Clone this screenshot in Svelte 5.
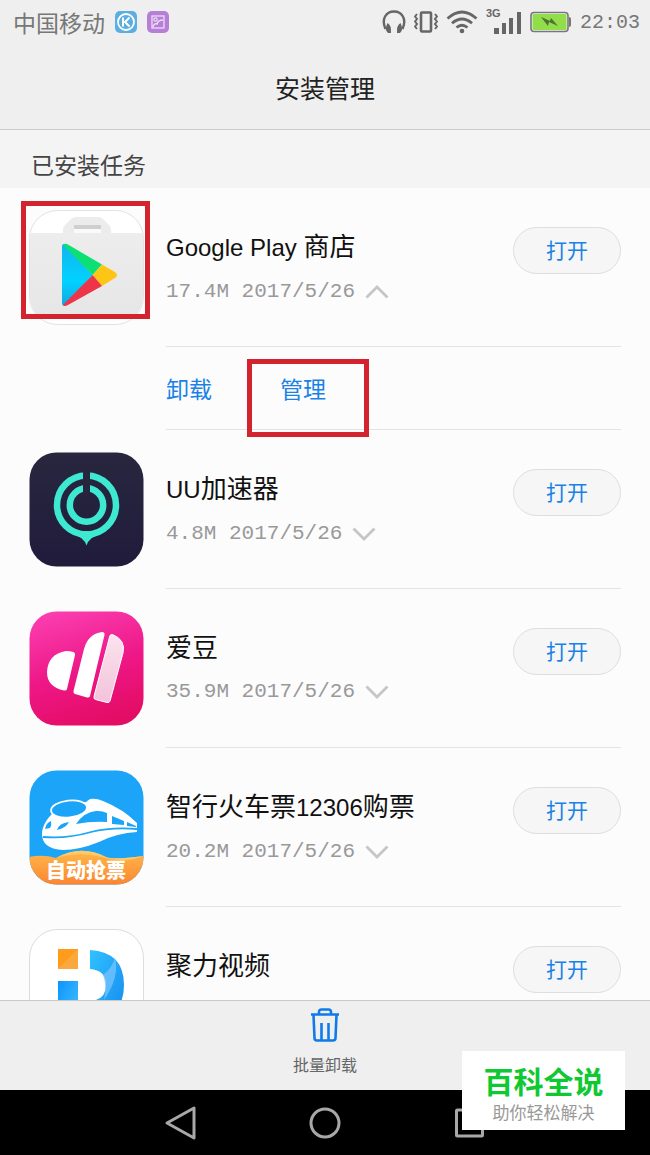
<script>
    let apps = $state([
        { id: 'play', name: 'Google Play 商店', size: '17.4M', date: '2017/5/26', open: true, marked: true },
        { id: 'uu', name: 'UU加速器', size: '4.8M', date: '2017/5/26', open: false },
        { id: 'idol', name: '爱豆', size: '35.9M', date: '2017/5/26', open: false },
        { id: 'train', name: '智行火车票12306购票', size: '20.2M', date: '2017/5/26', open: false },
        { id: 'video', name: '聚力视频', open: false }
    ]);

    // Split a name into latin and chinese parts
    function parts(name) {
        return name.match(/[\x00-\x7f]+|[^\x00-\x7f]+/g);
    }

    function isLatin(text) {
        return text.charCodeAt(0) < 128;
    }
</script>

<div class="screen">
    <div class="status">
        <span class="carrier">中国移动</span>
        <svg class="notice" width="22" height="22" viewBox="0 0 22 22">
            <rect width="22" height="22" rx="5" fill="#5bafe0" />
            <circle cx="11" cy="11" r="8" fill="none" stroke="#fff" stroke-width="1.8" />
            <path d="M8 6.500v9M14.500 6.500L10 11l4.500 4.500" fill="none" stroke="#fff" stroke-width="2" />
        </svg>
        <svg class="notice" width="22" height="22" viewBox="0 0 22 22">
            <rect width="22" height="22" rx="5" fill="#b57fd6" />
            <rect x="5" y="5" width="12" height="12" fill="none" stroke="#efdcf8" stroke-width="1.3" />
            <circle cx="8.500" cy="8.500" r="1.700" fill="none" stroke="#efdcf8" stroke-width="1.2" />
            <path d="M6 16q1-4 4-3 1-4 6-4" fill="none" stroke="#efdcf8" stroke-width="1.4" />
        </svg>
        <div class="signals">
            <svg width="24" height="24" viewBox="0 0 24 24">
                <path d="M3.500 19C-1 9 4 1.500 12 1.500S25 9 20.500 19" fill="none" stroke="#666" stroke-width="2.400" />
                <path d="M5.500 13q4 2 3.500 10H6Q2 20 5.500 13zM18.500 13q-4 2-3.500 10h3q4-3 .5-10z" fill="#666" />
            </svg>
            <svg width="24" height="24" viewBox="0 0 24 24">
                <rect x="7" y="2.500" width="10" height="19" rx="1" fill="none" stroke="#666" stroke-width="2.600" />
                <path d="M3 4L1 6.500l2 2.500-2 2.500L3 14l-2 2.500L3 19M21 4l2 2.500L21 9l2 2.500-2 2.500 2 2.500-2 2.500" fill="none" stroke="#666" stroke-width="2" />
            </svg>
            <svg width="32" height="24" viewBox="0 0 32 24">
                <path d="M1.500 8.500Q16-4.500 30.500 8.500M6 13.200q10-8.500 20 0M10.500 17.500q5.500-4.500 11 0" fill="none" stroke="#666" stroke-width="2.800" />
                <circle cx="16" cy="21" r="2.300" fill="#666" />
            </svg>
            <svg width="36" height="30" viewBox="0 0 36 30">
                <text x="0" y="10" font-size="11" font-weight="700" fill="#666">3G</text>
                <path d="M8 21h5v6H8zM16 16h4v11h-4zM23 11h4v16h-4zM31 5h4v22h-4z" fill="#666" />
            </svg>
            <svg width="42" height="22" viewBox="0 0 42 22">
                <rect x="1" y="1.500" width="37" height="19" rx="3" fill="#f2f2f2" stroke="#777" stroke-width="1.600" />
                <rect x="2.500" y="3" width="34" height="16" rx="1" fill="#92dd4a" />
                <path d="M39 6q2 0 2 2v6q0 2-2 2z" fill="#777" />
                <path d="M11 6l9 4 1-3 7 8-9-4-1 4z" fill="#4d7136" />
            </svg>
            <span class="clock">22:03</span>
        </div>
    </div>

    <header>
        <h1>安装管理</h1>
    </header>
    <h2>已安装任务</h2>

    <main>
        {#each apps as app (app.id)}
            <div class="row">
                <div class="icon">
                    {#if app.id === 'play'}
                        <svg viewBox="0 0 115 115">
                            <defs>
                                <linearGradient id="bag" x1="0" y1="0" x2="0" y2="1">
                                    <stop offset="0" stop-color="#ededed" />
                                    <stop offset="1" stop-color="#e6e6e6" />
                                </linearGradient>
                                <linearGradient id="playBlue" x1="0" y1="0" x2="0" y2="1">
                                    <stop offset="0" stop-color="#12b5ec" />
                                    <stop offset="0.600" stop-color="#00d2ff" />
                                    <stop offset="1" stop-color="#16a5dc" />
                                </linearGradient>
                            </defs>
                            <rect x="0.500" y="0.500" width="114" height="114" rx="28" fill="#fff" stroke="#e2e2e2" />
                            <path d="M34 23v-4q0-2 2-4l6-6q2-2 5-2h22q3 0 5 2l6 6q2 2 2 4v4z" fill="#ececec" />
                            <path d="M45 15h27v8H45z" fill="#fafafa" />
                            <path d="M45 15h27v4H45z" fill="#cfcfcf" />
                            <path d="M1 23h113v65q-1 11-9 19H10q-8-8-9-19z" fill="url(#bag)" />
                            <path d="M33 36q0-2 2-2l28.600 31L36 96q-3 0-3-3z" fill="url(#playBlue)" />
                            <path d="M34 35q2-2 4-1l35 20.500L63.600 65z" fill="#0ce075" />
                            <path d="M73 54.500l13 7.500q4 3 0 6l-13 8L63.600 65z" fill="#ffc516" />
                            <path d="M63.600 65L73 76 38 95.500q-3 1-4-.5z" fill="#ed3448" />
                        </svg>
                    {:else if app.id === 'uu'}
                        <svg viewBox="0 0 115 115">
                            <defs>
                                <linearGradient id="night" x1="0" y1="0" x2="0" y2="1">
                                    <stop offset="0" stop-color="#28273f" />
                                    <stop offset="1" stop-color="#201b3b" />
                                </linearGradient>
                            </defs>
                            <rect x="0.500" y="0.500" width="114" height="114" rx="27" fill="url(#night)" />
                            <circle cx="57.500" cy="53" r="29.500" fill="none" stroke="#3ee9d2" stroke-width="6.500" />
                            <circle cx="57.500" cy="53" r="16.700" fill="none" stroke="#3ee9d2" stroke-width="6.500" />
                            <path d="M42 81q13 4 15.500 12.500Q60 85 73 81l-15-2z" fill="#3ee9d2" />
                            <path d="M54 18h7v23h-7z" fill="#27263e" />
                        </svg>
                    {:else if app.id === 'idol'}
                        <svg viewBox="0 0 115 115">
                            <defs>
                                <linearGradient id="pink" x1="0.200" y1="0" x2="0.500" y2="1">
                                    <stop offset="0" stop-color="#fb3eb0" />
                                    <stop offset="0.550" stop-color="#ee1787" />
                                    <stop offset="1" stop-color="#e40d66" />
                                </linearGradient>
                                <linearGradient id="petal" x1="0" y1="0" x2="0" y2="1">
                                    <stop offset="0" stop-color="#fbe3ef" />
                                    <stop offset="1" stop-color="#f3c3d9" />
                                </linearGradient>
                            </defs>
                            <rect x="0.500" y="0.500" width="114" height="114" rx="27" fill="url(#pink)" />
                            <path d="M44.500 41q2 1 1.500 3l-8 34q-.5 2-3 1.500Q18 76 18 61q1-18 19-21 4 0 7.500 1z" fill="#fff" />
                            <path d="M73 21q3 0 2.500 3L61 85q-.5 2-3 1.500l-12-3.500q-2-.5-1.500-3L55 38q4-15 18-17z" fill="#fff" />
                            <path d="M80.500 26q.5-3 3-2.500Q97 29 94 42L81 90q-.5 2-3 1.500L66.500 88.500q-2-.5-1.500-3z" fill="url(#petal)" stroke="#fff" />
                        </svg>
                    {:else if app.id === 'train'}
                        <svg viewBox="0 0 115 115">
                            <defs>
                                <clipPath id="trainClip">
                                    <rect x="0.500" y="0.500" width="114" height="114" rx="27" />
                                </clipPath>
                                <linearGradient id="hill" x1="0" y1="0" x2="0" y2="1">
                                    <stop offset="0" stop-color="#ffb84a" />
                                    <stop offset="1" stop-color="#fb8532" />
                                </linearGradient>
                            </defs>
                            <g clip-path="url(#trainClip)">
                                <rect width="115" height="115" fill="#1ca5f8" />
                                <path d="M13 62q1-8 8-16l6-6 30-8 4-3q6-1 13 2 20 8 34 22v9q-20 1-38 10-20 8-36 8Q12 79 13 62z" fill="#fff" />
                                <ellipse cx="40" cy="39" rx="18" ry="8.500" fill="#1ca5f8" stroke="#fff" stroke-width="1.800" transform="rotate(-6 40 39)" />
                                <path d="M14 67q24 2 48-5 20-5 46-3" fill="none" stroke="#1ca5f8" stroke-width="1.800" />
                                <path d="M47 54q8-12 20-13 6-.5 11 2v9q-15-1-31 2zM83 46l12 5v4l-12-1zM98 52l9 4v1l-9-1zM28 60q2-7 12-8-3 6-12 8zM16 59q1-6 6-8 1 4-1 7z" fill="#1ca5f8" />
                                <path d="M0 87q14-3 27 1 25-14 50-1 6 3 38-1v29H0z" fill="url(#hill)" />
                                <path d="M27 88q25-14 50-1 6 3 38-1-22 8-42 1-22-6-46 1z" fill="#ffc966" />
                                <text x="57" y="108" text-anchor="middle" font-size="20" font-weight="900" fill="#fff">自动抢票</text>
                            </g>
                        </svg>
                    {:else}
                        <svg viewBox="0 0 115 115">
                            <defs>
                                <linearGradient id="bar" x1="0" y1="0" x2="1" y2="1">
                                    <stop offset="0" stop-color="#0d94ff" />
                                    <stop offset="1" stop-color="#45c3ff" />
                                </linearGradient>
                                <linearGradient id="bowl" x1="0" y1="0" x2="1" y2="1">
                                    <stop offset="0" stop-color="#2fc2ff" />
                                    <stop offset="1" stop-color="#1689ee" />
                                </linearGradient>
                            </defs>
                            <rect x="0.500" y="0.500" width="114" height="114" rx="28" fill="#fff" stroke="#dcdcdc" />
                            <path d="M29 20h20v20H29z" fill="#ff9c1b" />
                            <path d="M49 20v20H29z" fill="#fba93f" />
                            <path d="M29 52h20v42H29z" fill="url(#bar)" />
                            <path d="M61 21q34 2 34 35T61 91V72q16-1 16-16T61 40z" fill="url(#bowl)" />
                            <path d="M74 46q10-8 12-18 5 20-11 43 3-14-1-25z" fill="#7cc6ff" opacity="0.700" />
                        </svg>
                    {/if}
                    {#if app.marked}
                        <span class="frame"></span>
                    {/if}
                </div>
                <div class="body">
                    <div class="line">
                        <div class="info">
                            <h3>
                                {#each parts(app.name) as part}<span class:latin={isLatin(part)}>{part}</span>{/each}
                            </h3>
                            {#if app.size}
                                <button class="meta" aria-expanded={app.open} onclick={() => (app.open = !app.open)}>
                                    {app.size} {app.date}
                                    <svg class:up={app.open} width="24" height="14" viewBox="0 0 24 14">
                                        <path d="M1.500 1.500L12 12 22.500 1.500" fill="none" stroke="#c6c6c6" stroke-width="2.800" />
                                    </svg>
                                </button>
                            {/if}
                        </div>
                        <button class="launch">打开</button>
                    </div>
                    {#if app.open}
                        <div class="actions">
                            <button>卸载</button>
                            <button class:marked={app.marked}>管理</button>
                        </div>
                    {/if}
                </div>
            </div>
        {/each}
    </main>

    <footer>
        <button>
            <svg width="30" height="34" viewBox="0 0 30 34">
                <path d="M1 6.500h28M9 6V4q0-2.500 2.500-2.500h7Q21 1.500 21 4v2M3.500 7l1 23q0 2.500 2.500 2.500h16q2.500 0 2.500-2.500l1-23M11.500 15v17M18.500 15v17" fill="none" stroke="#0f7bea" stroke-width="2.600" />
            </svg>
            批量卸载
        </button>
    </footer>

    <nav>
        <button aria-label="返回">
            <svg width="32" height="36" viewBox="0 0 32 36">
                <path d="M3 18L30 3v30z" fill="none" stroke="#a8a8a8" stroke-width="3" stroke-linejoin="round" />
            </svg>
        </button>
        <button aria-label="主页">
            <svg width="32" height="36" viewBox="0 0 32 36">
                <circle cx="16" cy="18" r="14" fill="none" stroke="#a8a8a8" stroke-width="3" />
            </svg>
        </button>
        <button aria-label="最近">
            <svg width="32" height="36" viewBox="0 0 32 36">
                <rect x="2.500" y="5" width="26" height="26" rx="1" fill="none" stroke="#a8a8a8" stroke-width="3" />
            </svg>
        </button>
    </nav>

    <div class="brand">
        <strong>百科全说</strong>
        <span>助你轻松解决</span>
    </div>
</div>

<style>
    :global(body) {
        margin: 0;
    }

    .screen {
        position: relative;
        display: flex;
        flex-direction: column;
        height: 100vh;
        background: #fcfcfc;
        color: #111;
        font-family: "Liberation Sans", "Noto Sans CJK SC", sans-serif;
    }

    button {
        padding: 0;
        border: none;
        background: none;
        font: inherit;
        color: #1a82e6;
        cursor: pointer;
    }

    svg {
        display: block;
        flex: none;
    }

    .status {
        display: flex;
        align-items: center;
        gap: 10px;
        height: 44px;
        padding: 0 10px 0 13px;
        background: #efefef;
        color: #777;
    }

    .carrier {
        font-size: 23px;
    }

    .signals {
        display: flex;
        align-items: center;
        gap: 8px;
        margin-left: auto;
    }

    .clock {
        font-family: "Liberation Mono", monospace;
        font-size: 20px;
    }

    header {
        padding: 25px 0 20px;
        border-bottom: 1px solid #c9c9c9;
        background: #efefef;
        text-align: center;
    }

    h1, h2, h3 {
        margin: 0;
        font-weight: 400;
    }

    h1 {
        font-size: 25px;
        line-height: 40px;
        color: #222;
    }

    h2 {
        padding: 16px 31px 2px;
        background: #f4f4f4;
        font-size: 23px;
        line-height: 40px;
        color: #444;
    }

    main {
        flex: 1;
        min-height: 0;
        overflow-y: auto;
        scrollbar-width: none;
    }

    .row {
        display: flex;
        gap: 22px;
        padding: 0 29px;
    }

    .icon {
        position: relative;
        flex: none;
        width: 115px;
        height: 115px;
        margin-top: 22px;
    }

    .frame {
        position: absolute;
        top: -9px;
        left: -8px;
        width: 119px;
        height: 108px;
        border: 5px solid #d2232f;
    }

    .body {
        flex: 1;
        min-width: 0;
    }

    .line {
        display: flex;
        justify-content: space-between;
        align-items: flex-start;
        height: 119px;
        padding-top: 39px;
        border-bottom: 1px solid #e4e4e4;
    }

    h3 {
        font-size: 26px;
        line-height: 40px;
    }

    .latin {
        font-size: 24px;
        white-space: pre;
    }

    .meta {
        display: flex;
        align-items: center;
        gap: 10px;
        margin-top: 10px;
        font-family: "Liberation Mono", monospace;
        font-size: 21px;
        line-height: 28px;
        color: #999;
    }

    .up {
        transform: rotate(180deg);
    }

    .launch {
        width: 108px;
        height: 47px;
        padding-bottom: 4px;
        border: 1px solid #dedede;
        border-radius: 24px;
        background: #f6f6f6;
        font-size: 21px;
    }

    .actions {
        display: flex;
        gap: 68px;
        height: 82px;
        border-bottom: 1px solid #e4e4e4;
        font-size: 23px;
    }

    .actions button {
        position: relative;
    }

    .marked::after {
        content: "";
        position: absolute;
        top: 12px;
        left: -33px;
        width: 112px;
        height: 68px;
        border: 5px solid #d2232f;
    }

    footer {
        display: flex;
        justify-content: center;
        height: 89px;
        border-top: 1px solid #c9c9c9;
        background: #efefef;
    }

    footer button {
        display: flex;
        flex-direction: column;
        align-items: center;
        gap: 12px;
        padding-top: 7px;
        font-size: 16px;
        line-height: 24px;
        color: #666;
    }

    nav {
        display: flex;
        justify-content: center;
        gap: 113px;
        height: 65px;
        background: #000;
    }

    .brand {
        position: absolute;
        right: 25px;
        bottom: 25px;
        display: flex;
        flex-direction: column;
        align-items: center;
        width: 163px;
        padding: 13px 0 5px;
        box-sizing: border-box;
        background: #fff;
    }

    .brand strong {
        font-size: 30px;
        font-weight: 700;
        line-height: 38px;
        color: #0fc832;
    }

    .brand span {
        font-size: 17px;
        line-height: 23px;
        color: #999;
    }
</style>
